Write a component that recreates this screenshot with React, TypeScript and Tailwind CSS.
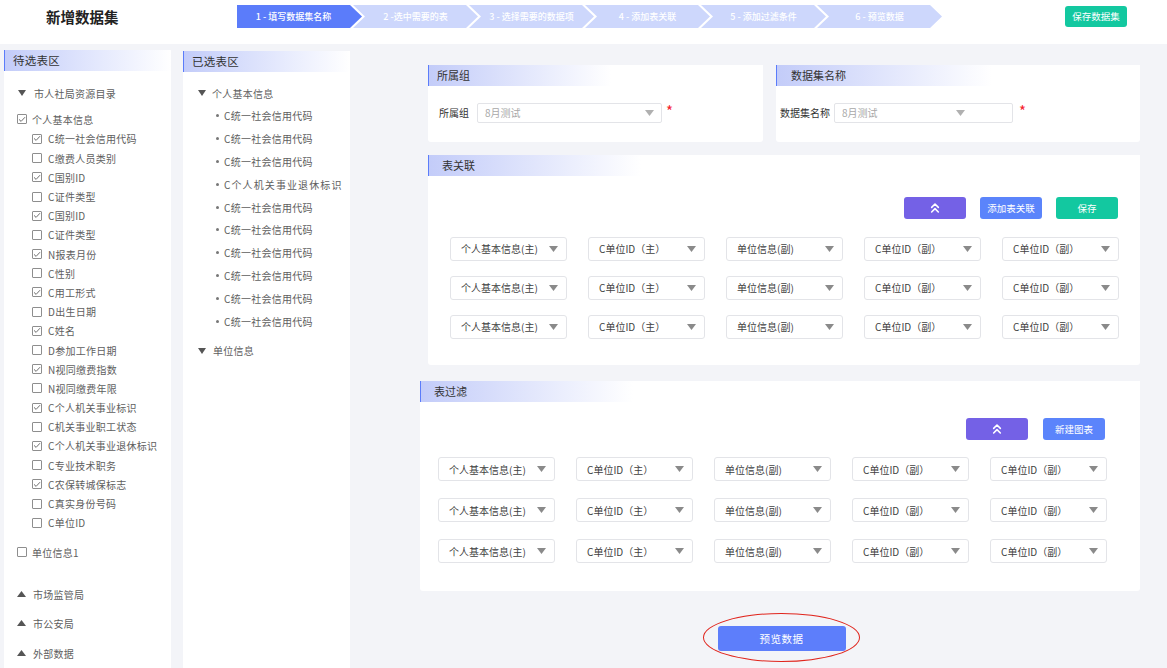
import { ChevronsUp } from "lucide-react";

const leftItems: [string, boolean][] = [
  ["C统一社会信用代码", true],
  ["C缴费人员类别", false],
  ["C国别ID", true],
  ["C证件类型", false],
  ["C国别ID", true],
  ["C证件类型", false],
  ["N报表月份", true],
  ["C性别", false],
  ["C用工形式", true],
  ["D出生日期", false],
  ["C姓名", true],
  ["D参加工作日期", false],
  ["N视同缴费指数", true],
  ["N视同缴费年限", false],
  ["C个人机关事业标识", true],
  ["C机关事业职工状态", false],
  ["C个人机关事业退休标识", true],
  ["C专业技术职务", false],
  ["C农保转城保标志", true],
  ["C真实身份号码", false],
  ["C单位ID", false],
];

const midItems = [
  "C统一社会信用代码",
  "C统一社会信用代码",
  "C统一社会信用代码",
  "C个人机关事业退休标识",
  "C统一社会信用代码",
  "C统一社会信用代码",
  "C统一社会信用代码",
  "C统一社会信用代码",
  "C统一社会信用代码",
  "C统一社会信用代码",
];

const cols = ["个人基本信息(主)", "C单位ID（主）", "单位信息(副)", "C单位ID（副）", "C单位ID（副）"];

const steps = [
  "1 - 填写数据集名称",
  "2 -选中需要的表",
  "3 - 选择需要的数据项",
  "4 - 添加表关联",
  "5 - 添加过滤条件",
  "6 - 预览数据",
];

function Check({ checked }: { checked: boolean }) {
  return (
    <span className="w-[10px] h-[10px] border border-[#8e8e8e] rounded-[1px] bg-white flex items-center justify-center shrink-0">
      {checked && (
        <svg width="8" height="7" viewBox="0 0 8 7">
          <path d="M1 3.4 L3.1 5.4 L7 1.2" fill="none" stroke="#6e6e6e" strokeWidth="1" />
        </svg>
      )}
    </span>
  );
}

function TriDown({ w = 8, h = 6, color = "#555" }: { w?: number; h?: number; color?: string }) {
  return (
    <svg width={w} height={h} viewBox={`0 0 ${w} ${h}`} className="shrink-0">
      <path d={`M0 0 H${w} L${w / 2} ${h} Z`} fill={color} />
    </svg>
  );
}

function TriUp({ w = 9, h = 6, color = "#555" }: { w?: number; h?: number; color?: string }) {
  return (
    <svg width={w} height={h} viewBox={`0 0 ${w} ${h}`} className="shrink-0">
      <path d={`M0 ${h} H${w} L${w / 2} 0 Z`} fill={color} />
    </svg>
  );
}

function PanelHeader({ title }: { title: string }) {
  return (
    <div className="h-[21px] flex items-center pl-[8px] border-l border-[#5b7cfa] bg-linear-to-r from-[#c3ccf9] to-white text-[11.5px] text-[#333]">
      {title}
    </div>
  );
}

function CardHeader({ title, pl, grad }: { title: string; pl: string; grad: string }) {
  return (
    <div className={`h-[21px] flex items-center border-l border-[#5b7cfa] text-[11px] text-[#333] ${pl} ${grad}`}>
      {title}
    </div>
  );
}

function Sel({ text }: { text: string }) {
  return (
    <div className="w-[117px] h-[24px] shrink-0 bg-white border border-[#e3e4e8] rounded-[3px] flex items-center pl-[10px] pr-[8px] text-[10px] text-[#3f3f3f]">
      <span className="whitespace-nowrap">{text}</span>
      <span className="ml-auto">
        <TriDown w={9} h={6} color="#8a8a8a" />
      </span>
    </div>
  );
}

export default function App() {
  return (
    <div className="w-[1167px] h-[668px] overflow-hidden bg-[#f3f4f8] font-['Noto_Sans_CJK_SC',sans-serif]">
      {/* header */}
      <div className="h-[44px] bg-white">
        <div className="h-[33px] flex items-center">
          <div className="pl-[46px] w-[237px] text-[14.5px] font-bold text-[#222]">新增数据集</div>
          <div className="flex items-center">
            {steps.map((s, i) => (
              <div
                key={i}
                className={`h-[23px] w-[125px] flex items-center justify-center text-[9px] font-medium text-white whitespace-nowrap ${
                  i === 0
                    ? "bg-[#5b7cfa] pr-[12px] [clip-path:polygon(0_0,calc(100%_-_12px)_0,100%_50%,calc(100%_-_12px)_100%,0_100%)]"
                    : "bg-[#cdd7fc] -ml-[9px] pl-[12px] pr-[12px] [clip-path:polygon(0_0,calc(100%_-_12px)_0,100%_50%,calc(100%_-_12px)_100%,0_100%,12px_50%)]"
                }`}
              >
                {s}
              </div>
            ))}
          </div>
          <div className="ml-auto mr-[40px] w-[62px] h-[21px] rounded-[3px] bg-[#13c8a0] text-white text-[9.5px] flex items-center justify-center">
            保存数据集
          </div>
        </div>
      </div>

      {/* body */}
      <div className="flex h-[624px]">
        {/* left panel */}
        <div className="ml-[4px] mt-[6px] w-[167px] bg-white rounded-tr-[4px] text-[10px] text-[#5e5e5e] tracking-[0.25px]">
          <PanelHeader title="待选表区" />
          <div className="pt-[12px]">
            <div className="h-[20px] flex items-center pl-[14px]">
              <TriDown />
              <span className="ml-[8px]">市人社局资源目录</span>
            </div>
            <div className="h-[20px] mt-[6px] flex items-center pl-[13px]">
              <Check checked />
              <span className="ml-[5px]">个人基本信息</span>
            </div>
            <div className="mt-[0.4px]">
              {leftItems.map(([t, c], i) => (
                <div key={i} className="h-[19.2px] flex items-center pl-[28px]">
                  <Check checked={c} />
                  <span className="ml-[6px] whitespace-nowrap">{t}</span>
                </div>
              ))}
            </div>
            <div className="h-[20px] mt-[10px] flex items-center pl-[13px]">
              <Check checked={false} />
              <span className="ml-[5px]">单位信息1</span>
            </div>
            <div className="h-[20px] mt-[22px] flex items-center pl-[13px]">
              <TriUp />
              <span className="ml-[7px]">市场监管局</span>
            </div>
            <div className="h-[20px] mt-[9px] flex items-center pl-[13px]">
              <TriUp />
              <span className="ml-[7px]">市公安局</span>
            </div>
            <div className="h-[20px] mt-[10px] flex items-center pl-[13px]">
              <TriUp />
              <span className="ml-[7px]">外部数据</span>
            </div>
          </div>
        </div>

        {/* middle panel */}
        <div className="ml-[12px] mt-[7px] w-[167px] bg-white rounded-tr-[4px] text-[10px] text-[#5e5e5e] tracking-[0.25px]">
          <PanelHeader title="已选表区" />
          <div className="pt-[11px]">
            <div className="h-[20px] flex items-center pl-[15px]">
              <TriDown />
              <span className="ml-[6px]">个人基本信息</span>
            </div>
            <div className="mt-[1.6px]">
              {midItems.map((t, i) => (
                <div key={i} className="h-[22.8px] flex items-center pl-[33px]">
                  <span className="w-[3px] h-[3px] rounded-full bg-[#777] shrink-0" />
                  <span className={`ml-[5px] whitespace-nowrap ${i === 3 ? "tracking-[1.1px]" : ""}`}>{t}</span>
                </div>
              ))}
            </div>
            <div className="h-[20px] mt-[8.4px] flex items-center pl-[15px]">
              <TriDown />
              <span className="ml-[7px]">单位信息</span>
            </div>
          </div>
        </div>

        {/* right area */}
        <div className="pl-[70px] pt-[21px]">
          <div className="w-[720px] flex flex-col">
            <div className="ml-[8px] flex gap-[13px]">
              {/* card 1 */}
              <div className="w-[335px] h-[77px] bg-white rounded-[3px]">
                <CardHeader
                  title="所属组"
                  pl="pl-[8px]"
                  grad="bg-[linear-gradient(to_right,#c3ccf9,#ffffff_182px)]"
                />
                <div className="mt-[16.7px] h-[20px] flex items-center pl-[11px] text-[10px]">
                  <span className="text-[#333]">所属组</span>
                  <div className="ml-[8px] w-[185px] h-[20px] border border-[#e3e4e8] rounded-[2px] flex items-center pl-[7px] pr-[7px] text-[#a8a8a8]">
                    <span>8月测试</span>
                    <span className="ml-auto">
                      <TriDown w={9} h={6} color="#b0b0b0" />
                    </span>
                  </div>
                  <span className="ml-[4px] self-start leading-none text-[15px] text-[#f5222d]">*</span>
                </div>
              </div>
              {/* card 2 */}
              <div className="w-[364px] h-[77px] bg-white rounded-[3px]">
                <CardHeader
                  title="数据集名称"
                  pl="pl-[14px]"
                  grad="bg-[linear-gradient(to_right,#c3ccf9,#ffffff_215px)]"
                />
                <div className="mt-[16.7px] h-[20px] flex items-center pl-[4px] text-[10px]">
                  <span className="text-[#333]">数据集名称</span>
                  <div className="ml-[4px] w-[179px] h-[20px] border border-[#e3e4e8] rounded-[2px] flex items-center pl-[7px] text-[#a8a8a8]">
                    <span>8月测试</span>
                    <span className="ml-auto mr-[47px]">
                      <TriDown w={9} h={6} color="#b0b0b0" />
                    </span>
                  </div>
                  <span className="ml-[6px] self-start leading-none text-[15px] text-[#f5222d]">*</span>
                </div>
              </div>
            </div>

            {/* card 3 */}
            <div className="ml-[8px] mt-[13px] w-[712px] h-[210px] bg-white rounded-[3px]">
              <CardHeader
                title="表关联"
                pl="pl-[13px]"
                grad="bg-[linear-gradient(to_right,#c3ccf9,#ffffff_212px)]"
              />
              <div className="mt-[20.7px] flex justify-end pr-[22px] gap-[14px] text-[9.5px] text-white">
                <div className="w-[62px] h-[22px] rounded-[3px] bg-[#7461e6] flex items-center justify-center">
                  <ChevronsUp size={16} strokeWidth={2.4} color="#fff" />
                </div>
                <div className="w-[62px] h-[22px] rounded-[3px] bg-[#5b84fb] flex items-center justify-center">添加表关联</div>
                <div className="w-[62px] h-[22px] rounded-[3px] bg-[#13c8a0] flex items-center justify-center">保存</div>
              </div>
              <div className="mt-[18px] pl-[22px] flex flex-col gap-[15px]">
                {[0, 1, 2].map((r) => (
                  <div key={r} className="flex gap-[21px]">
                    {cols.map((c, i) => (
                      <Sel key={i} text={c} />
                    ))}
                  </div>
                ))}
              </div>
            </div>

            {/* card 4 */}
            <div className="mt-[16px] w-[720px] h-[210px] bg-white rounded-[3px]">
              <CardHeader
                title="表过滤"
                pl="pl-[13px]"
                grad="bg-[linear-gradient(to_right,#c3ccf9,#ffffff_212px)]"
              />
              <div className="mt-[16px] flex justify-end pr-[35px] gap-[15px] text-[9.5px] text-white">
                <div className="w-[62px] h-[22px] rounded-[3px] bg-[#7461e6] flex items-center justify-center">
                  <ChevronsUp size={16} strokeWidth={2.4} color="#fff" />
                </div>
                <div className="w-[62px] h-[22px] rounded-[3px] bg-[#5b84fb] flex items-center justify-center">新建图表</div>
              </div>
              <div className="mt-[17px] pl-[18px] flex flex-col gap-[17px]">
                {[0, 1, 2].map((r) => (
                  <div key={r} className="flex gap-[21px]">
                    {cols.map((c, i) => (
                      <Sel key={i} text={c} />
                    ))}
                  </div>
                ))}
              </div>
            </div>

            {/* preview */}
            <div className="mt-[35px] flex justify-center pl-[3px]">
              <div className="relative">
                <div className="w-[128px] h-[25px] rounded-[3px] bg-[#5d7efb] text-white text-[10.5px] flex items-center justify-center tracking-[0.5px]">
                  预览数据
                </div>
                <div className="absolute left-[-15px] top-[-13px] w-[157px] h-[49px] rounded-[50%] border border-[#e0251d]" />
              </div>
            </div>
          </div>
        </div>
      </div>
    </div>
  );
}
